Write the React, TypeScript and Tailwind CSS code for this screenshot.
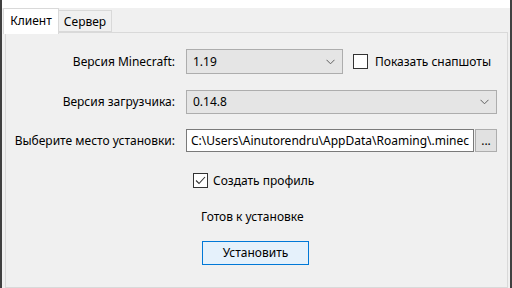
import React from "react";

function Chevron() {
  return (
    <svg width="9" height="6" viewBox="0 0 9 6" className="shrink-0">
      <polyline points="0.5,0.8 4.5,4.8 8.5,0.8" fill="none" stroke="#606060" strokeWidth="1" />
    </svg>
  );
}

function Select({ value, width }: { value: string; width: string }) {
  return (
    <div
      className={`${width} h-full flex items-center justify-between pl-[6px] pr-[7px] bg-[#e5e5e5] border border-[#adadad]`}
    >
      <span>{value}</span>
      <Chevron />
    </div>
  );
}

function Checkbox({ checked }: { checked?: boolean }) {
  return (
    <div className="w-[15px] h-[15px] shrink-0 bg-white border border-[#333333] flex items-center justify-center">
      {checked && (
        <svg width="11" height="9" viewBox="0 0 11 9">
          <polyline points="1,4.5 4,7.5 10,1" fill="none" stroke="#333333" strokeWidth="1.1" />
        </svg>
      )}
    </div>
  );
}

export default function App() {
  return (
    <div
      className="w-[512px] h-[288px] overflow-hidden bg-[#f0f0f0] border-x-2 border-[#404040] flex flex-col text-[12px] text-[#000] leading-none"
      style={{ fontFamily: '"Segoe UI", "Noto Sans", "Open Sans", sans-serif' }}
    >
      {/* top strip */}
      <div className="h-[8px] bg-white shrink-0" />

      {/* tabs */}
      <div className="h-[24px] shrink-0 flex items-end pl-px">
        <div className="relative z-10 -mb-[2px] h-[26px] w-[56px] bg-white border border-b-0 border-[#d9d9d9] flex items-center justify-center pb-[2px]">
          Клиент
        </div>
        <div className="h-[22px] w-[53px] bg-[#f0f0f0] border border-l-0 border-[#d9d9d9] flex items-center justify-center pt-px">
          Сервер
        </div>
      </div>

      {/* panel */}
      <div className="flex-1 ml-[3px] mr-[2px] border border-[#d9d9d9] bg-[#f0f0f0] pt-[16px] flex flex-col">
        <div className="h-[25px] flex items-center">
          <div className="w-[169px] text-right">Версия Minecraft:</div>
          <div className="ml-[11px] h-full">
            <Select value="1.19" width="w-[157px]" />
          </div>
          <div className="ml-[10px]">
            <Checkbox />
          </div>
          <span className="ml-[7px]">Показать снапшоты</span>
        </div>

        <div className="mt-[16px] h-[24px] flex items-center">
          <div className="w-[169px] text-right">Версия загрузчика:</div>
          <div className="ml-[11px] h-full">
            <Select value="0.14.8" width="w-[311px]" />
          </div>
        </div>

        <div className="mt-[15px] h-[23px] flex items-center">
          <div className="w-[169px] text-right">Выберите место установки:</div>
          <div className="ml-[11px] h-full w-[288px] bg-white border border-[#7a7a7a] flex items-center pl-[4px] pr-[2px]">
            <span className="whitespace-nowrap">C:\Users\Ainutorendru\AppData\Roaming\.minec</span>
          </div>
          <div className="ml-px h-full w-[22px] bg-[#e1e1e1] border border-[#adadad] flex items-center justify-center">
            ...
          </div>
        </div>

        <div className="mt-[21px] h-[15px] flex items-center">
          <div className="ml-[187px]">
            <Checkbox checked />
          </div>
          <span className="ml-[5px]">Создать профиль</span>
        </div>

        <div className="mt-[21px] h-[16px] flex items-center pl-[195px]">Готов к установке</div>

        <div className="mt-[16px] ml-[196px] h-[24px] w-[107px] bg-[#e5f1fb] border border-[#0078d7] flex items-center justify-center">
          Установить
        </div>
      </div>
    </div>
  );
}
